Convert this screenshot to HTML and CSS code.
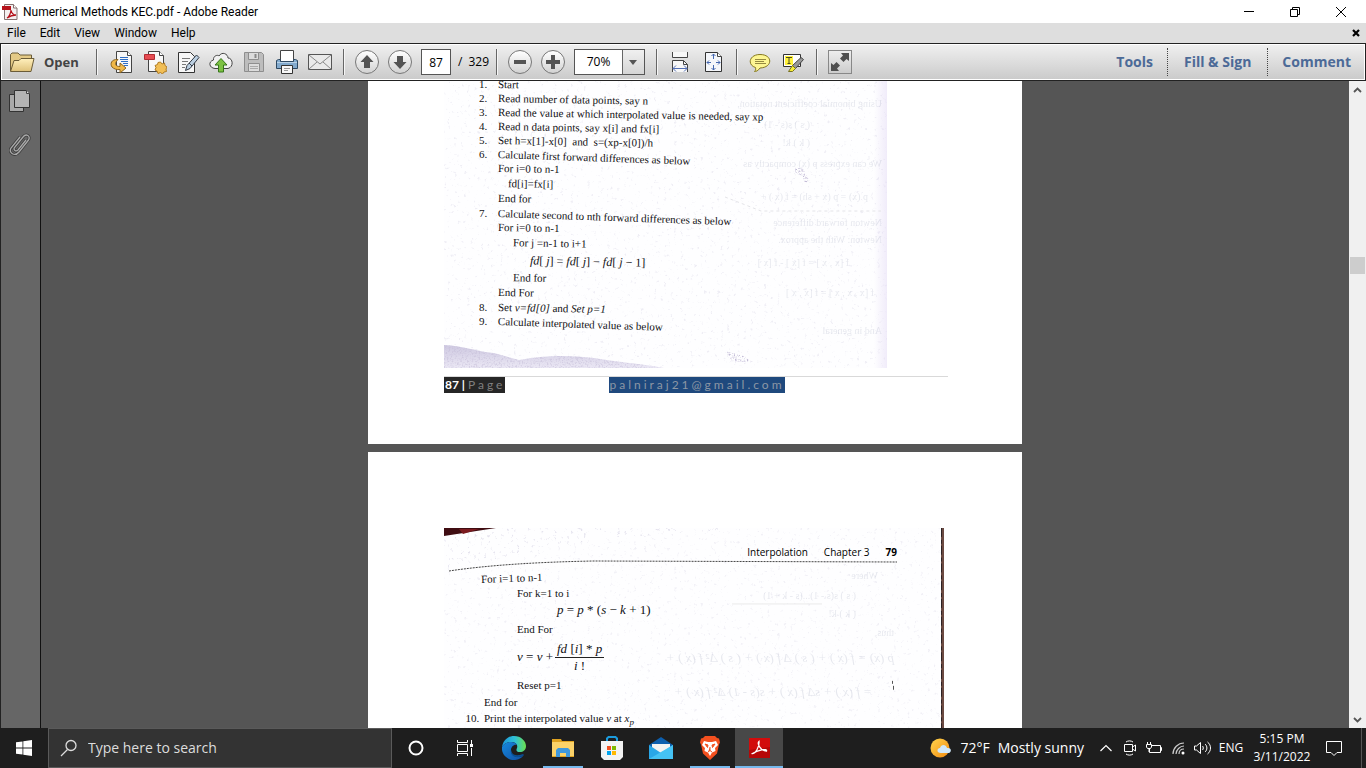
FILE: index.html
```html
<!DOCTYPE html>
<html lang="en">
<head>
<meta charset="utf-8">
<title>Numerical Methods KEC.pdf - Adobe Reader</title>
<link rel="stylesheet" href="styles.css">
</head>
<body>
<header class="titlebar">
  <svg class="app-icon" width="16" height="16" viewBox="0 0 16 16" aria-hidden="true">
    <path d="M2.500.5h9l3.500 3.500v11.500H2.500z" fill="#f4f0f0" stroke="#85706f"/>
    <path d="M11.500.5V4H15" fill="#fff" stroke="#85706f"/>
    <path d="M0 2h9v4H0z" fill="#b5121b"/>
    <path d="M5 14c2-1 4-5 4-8 .5 3 2 5 5 5-3 0-6 1-9 3z" fill="none" stroke="#b5121b" stroke-width="1.300"/>
  </svg>
  <h1 class="window-title">Numerical Methods KEC.pdf - Adobe Reader</h1>
  <div class="window-controls">
    <button class="win-btn" aria-label="Minimize"><svg width="12" height="12" viewBox="0 0 12 12"><path d="M1 5.500h10" stroke="#000" fill="none"/></svg></button>
    <button class="win-btn" aria-label="Restore"><svg width="12" height="12" viewBox="0 0 12 12"><path d="M1.500 3.500h7v7h-7zM3.500 3.500v-2h7v7h-2" stroke="#000" fill="none"/></svg></button>
    <button class="win-btn" aria-label="Close"><svg width="12" height="12" viewBox="0 0 12 12"><path d="M1 1l10 10M11 1L1 11" stroke="#000" fill="none"/></svg></button>
  </div>
</header>
<nav class="menubar" aria-label="Menu">
  <button class="menu-item">File</button>
  <button class="menu-item">Edit</button>
  <button class="menu-item">View</button>
  <button class="menu-item">Window</button>
  <button class="menu-item">Help</button>
  <button class="close-doc" aria-label="Close document"><svg width="8" height="8" viewBox="0 0 8 8"><path d="M1 1l6 6M7 1L1 7" stroke="#000" stroke-width="2.200"/></svg></button>
</nav>
<div class="toolbar" role="toolbar" aria-label="Tools">
  <button class="open-btn">
    <svg width="25" height="24" viewBox="0 0 25 24" aria-hidden="true">
      <defs><linearGradient id="folder" x2="0" y2="1"><stop offset="0" stop-color="#fff0bd"/><stop offset="1" stop-color="#dfc27a"/></linearGradient></defs>
      <path d="M.5 21V4.500l1.500-1.500h6l2 2h11.500v3.500" fill="#e4ca87" stroke="#6b5c38"/>
      <path d="M.5 21.500L4 10.500h5l2-2h13L21 21.500z" fill="url(#folder)" stroke="#6b5c38"/>
    </svg>
    <span>Open</span>
  </button>
  <span class="sep"></span>
  <div class="group files">
    <button class="tool" aria-label="Convert"><svg width="24" height="24" viewBox="0 0 24 24"><path d="M6.500 1.500h11l4 4v17h-15z" fill="#f7f7f7" stroke="#444"/><path d="M17.500 1.500v4h4" fill="#fff" stroke="#444"/><path d="M10 7.500h8M10 9.500h8M11 11.500h7M13 13.500h5M14 15.500h4" stroke="#2f6ec4"/><path d="M8 9.500C1 9 0 14 2 17c2 2 5 3 8 2.500V23l6-5-6-5v3.500c-5 0-6-3-2-7z" fill="#f0b848" stroke="#8c6420"/></svg></button>
    <button class="tool" aria-label="Create PDF"><svg width="24" height="24" viewBox="0 0 24 24"><path d="M5.500 1.500h11l4 4v16h-15z" fill="#f8f8f8" stroke="#444"/><path d="M16.500 1.500v4h4" fill="#fff" stroke="#444"/><path d="M1.500 4.500h10v5h-10z" fill="#e64c52" stroke="#b12a32"/><path d="M17.500 12l1.500 2 2.500-1 .5 2.500 2 1.500-1 2 .5 2.500-2.500.5-1.500 2-2-1.500-2.500 1-1-2.500-2-1 1-2.500-1-2 2.500-1 .5-2z" fill="#f1be55" stroke="#b07c24"/></svg></button>
    <button class="tool" aria-label="Edit PDF"><svg width="24" height="24" viewBox="0 0 24 24"><path d="M2.500 2.500h12l4 4v16h-16z" fill="#f7f7f7" stroke="#333"/><path d="M6 8.500h8M6 11.500h6M6 14.500h4M6 17.500h3" stroke="#777"/><path d="M20.500 5l2.500 2.500-9 11-4.500 2 1.500-5z" fill="#bcd0e2" stroke="#333a45"/><path d="M13 13l3 3" stroke="#333a45"/></svg></button>
    <button class="tool" aria-label="Upload to cloud"><svg width="24" height="24" viewBox="0 0 24 24"><path d="M6 18.500c-6-.5-7-7-1.500-8.500C4 5.500 9 4.500 10 6c3-5 9-2 9 2 5 0 6 9 0 10.500z" fill="#f1f1f1" stroke="#444"/><path d="M12 8.500l6 6.500h-3.500v7h-5v-7H6z" fill="#7cc142" stroke="#37761b"/></svg></button>
    <button class="tool" aria-label="Save" disabled><svg width="24" height="24" viewBox="0 0 24 24"><path d="M2.500 2.500h17l2 2v17h-19z" fill="#bdbdbd" stroke="#8e8e8e"/><path d="M6.500 2.500h10v7h-10zM6.500 13.500h11v8h-11z" fill="#dcdcdc" stroke="#8e8e8e"/><path d="M13.500 4v4" stroke="#888" stroke-width="2"/><path d="M8 16.500h8M8 18.500h8" stroke="#aaa"/></svg></button>
    <button class="tool" aria-label="Print"><svg width="24" height="24" viewBox="0 0 24 24"><path d="M5.500.5h13v11h-13z" fill="#fff" stroke="#444"/><path d="M1.500 10.500l2-1h2v2h13v-2h2l2 1v8h-21z" fill="#82aace" stroke="#2d4862"/><path d="M2 12.500h20" stroke="#b9d2e7"/><path d="M6.500 15.500h11v8h-11z" fill="#f7f7f7" stroke="#333"/><path d="M9 18.500h6M9 20.500h4" stroke="#999"/></svg></button>
    <button class="tool" aria-label="Email"><svg width="24" height="24" viewBox="0 0 24 24"><path d="M.5 4.500h23v15H.5z" fill="#e9e9e9" stroke="#555"/><path d="M1 5l11 9 11-9M1 19l8-7M23 19l-8-7" fill="none" stroke="#888"/></svg></button>
  </div>
  <span class="sep"></span>
  <div class="group">
    <button class="round" aria-label="Previous page"><svg width="24" height="24" viewBox="0 0 24 24"><path d="M12 5l6.500 7H15v6H9v-6H5.500z" fill="#545454"/></svg></button>
    <button class="round" aria-label="Next page"><svg width="24" height="24" viewBox="0 0 24 24"><path d="M12 19l6.500-7H15V6H9v6H5.500z" fill="#545454"/></svg></button>
    <div class="pager">
      <input class="page-no" id="page-no" type="text" value="87" aria-label="Page number">
      <label class="page-total" for="page-no"><span>/</span><span>329</span></label>
    </div>
  </div>
  <span class="sep"></span>
  <div class="group">
    <button class="round" aria-label="Zoom out"><svg width="24" height="24" viewBox="0 0 24 24"><path d="M6 10h12v4H6z" fill="#545454"/></svg></button>
    <button class="round" aria-label="Zoom in"><svg width="24" height="24" viewBox="0 0 24 24"><path d="M10 5h4v5h5v4h-5v5h-4v-5H5v-4h5z" fill="#545454"/></svg></button>
    <div class="zoom-box">
      <select class="zoom" aria-label="Zoom level"><option>70%</option></select>
      <svg class="zoom-arrow" width="22" height="24" viewBox="0 0 22 24" aria-hidden="true"><path d="M0 0v24" stroke="#666" stroke-width="2"/><path d="M7 10h8l-4 5z" fill="#555"/></svg>
    </div>
  </div>
  <span class="sep"></span>
  <div class="group">
    <button class="tool" aria-label="Fit width"><svg width="24" height="24" viewBox="0 0 24 24"><path d="M4.500 2v5.500h15V2M4.500 22V10.500h11l4 4V22" fill="#f7f7f7" stroke="#444"/><path d="M15.500 10.500v4h4" fill="none" stroke="#444"/><path d="M5 18.500h14M8 15.500l-3 3 3 3M16 15.500l3 3-3 3" stroke="#5470b5" fill="none"/></svg></button>
    <button class="tool" aria-label="Fit page"><svg width="24" height="24" viewBox="0 0 24 24"><path d="M4.500 2.500h12l4 4v15h-16z" fill="#f4f6fa" stroke="#333"/><path d="M16.500 2.500v4h4" fill="#fff" stroke="#444"/><path d="M12.500 4v5M12.500 15v5M6 12.500h4M15 12.500h4M10.500 6l2-2 2 2M10.500 18l2 2 2-2M8 10.500l-2 2 2 2M17 10.500l2 2-2 2" stroke="#4467b0" fill="none"/></svg></button>
  </div>
  <span class="sep"></span>
  <div class="group">
    <button class="tool" aria-label="Add note"><svg width="24" height="24" viewBox="0 0 24 24"><path d="M12 4.500c13 0 13 13 0 13.500-2 3-4 3.500-5.500 3.500 1-1 1.500-2 1-4C-1 15 1 4.500 12 4.500z" fill="#fdf692" stroke="#85781f"/><path d="M7 9.500h11M7 11.500h9M7 13.500h11" stroke="#958a40"/></svg></button>
    <button class="tool" aria-label="Highlight text"><svg width="24" height="24" viewBox="0 0 24 24"><path d="M2.500 4.500h17v12h-17z" fill="#fff" stroke="#333"/><path d="M4 6h8v9H4z" fill="#fff23c"/><path d="M5 7.500h6M8 7v7M6.500 13.500h3" stroke="#4b4b20"/><path d="M20 7.500l2.500 2-8 9-3-3z" fill="#999" stroke="#444"/><path d="M11.500 15.500l3 3-3 3h-4z" fill="#f4ed36" stroke="#777022"/></svg></button>
  </div>
  <span class="sep"></span>
  <button class="tool expand" aria-label="Read mode"><svg width="24" height="24" viewBox="0 0 24 24"><path d="M13 3h8v8l-2.500-2-3 3-3.500-3.500 3-3zM3 13l2.500 2 3-3 3.500 3.500-3 3 2 2.500H3z" fill="#505050"/></svg></button>
  <div class="panes">
    <button class="pane-btn">Tools</button>
    <button class="pane-btn wide">Fill &amp; Sign</button>
    <button class="pane-btn">Comment</button>
  </div>
</div>
<main class="workspace">
  <aside class="nav-pane">
    <button class="nav-btn" aria-label="Page thumbnails"><svg width="22" height="24" viewBox="0 0 22 24"><path d="M.5 5.500h14v17H.5z" fill="#a9a9a9" stroke="#333"/><path d="M5.500 1.500h12l3 3v14h-15z" fill="#b4b4b4" stroke="#333"/><path d="M17.500 1.500v3h3" fill="#ddd" stroke="#444"/></svg></button>
    <button class="nav-btn" aria-label="Attachments"><svg width="22" height="24" viewBox="0 0 22 24"><path d="M17 8l-8 10c-2 2-5 0-3.500-2.500L14 5c3-4 8-1 5.500 3L10 20c-4 5-11 1-8-4l9-11" fill="none" stroke="#3e3e3e" stroke-width="3"/><path d="M17 8l-8 10c-2 2-5 0-3.500-2.500L14 5c3-4 8-1 5.500 3L10 20c-4 5-11 1-8-4l9-11" fill="none" stroke="#aaa" stroke-width="1.300"/></svg></button>
  </aside>
  <div class="canvas">
    <section class="page first">
      <article class="scan scan-a">
        <svg class="texture" viewBox="0 0 443 287" preserveAspectRatio="none" aria-hidden="true">
          <defs>
            <filter id="specks" x="0" y="0" width="1" height="1"><feTurbulence type="fractalNoise" baseFrequency=".3" numOctaves="3" seed="4"/><feColorMatrix values="0 0 0 0 .7  0 0 0 0 .68  0 0 0 0 .8  0 0 0 6 -3.900"/><feComposite in2="SourceGraphic" operator="in"/></filter>
            <filter id="grain" x="0" y="0" width="1" height="1"><feTurbulence type="fractalNoise" baseFrequency=".6" numOctaves="3" seed="9"/><feColorMatrix values="0 0 0 0 .55  0 0 0 0 .5  0 0 0 0 .68  0 0 0 4 -1.900"/><feComposite in2="SourceGraphic" operator="in"/></filter>
            <linearGradient id="edge"><stop offset="0" stop-color="#e3daf5" stop-opacity="0"/><stop offset="1" stop-color="#e3daf5" stop-opacity=".5"/></linearGradient>
            <linearGradient id="fade" x2="0" y2="1"><stop offset="0" stop-color="#c3bcda"/><stop offset="1" stop-color="#e6e2f2"/></linearGradient>
          </defs>
          <path d="M0 0h443v287H0z" fill="#fefeff"/>
          <path d="M0 0h443v287H0z" filter="url(#specks)" opacity=".4"/>
          <path d="M430 0h13v287h-13z" fill="url(#edge)"/>
          <path d="M0 264c20 1 35 7 50 8l25 7c25-5 50-5 75-2 20 4 45 5 70 10H0z" fill="url(#fade)" opacity=".8"/>
          <path d="M0 264c20 1 35 7 50 8l25 7c25-5 50-5 75-2 20 4 45 5 70 10H0z" filter="url(#grain)" opacity=".5"/>
          <path d="M281 270l18 5 9 6-22-1z" fill="#cbc5dd" filter="url(#grain)"/>
          <path d="M352 86l8 3 5 10-4 4-3-9-9-2z" fill="#bbb" filter="url(#grain)"/>
          <path d="M281 116l36 14h120" fill="none" stroke="#e4e4e8" stroke-dasharray="3 3"/>
          <g class="ghost">
            <text transform="translate(438 26) scale(-1 1)">Using binomial coefficient notation,</text>
            <text transform="translate(366 47) scale(-1 1)">( s )   s(s - 1)</text>
            <text transform="translate(366 65) scale(-1 1)">( k )        k!</text>
            <text transform="translate(438 86) scale(-1 1)">We can express p (x) compactly as</text>
            <text transform="translate(424 119) scale(-1 1)">p (x) = p (x + sh) = f (x ) +</text>
            <text transform="translate(438 145) scale(-1 1)">Newton forward difference</text>
            <text transform="translate(438 162) scale(-1 1)">Newton: With the approx.</text>
            <text transform="translate(405 185) scale(-1 1)">f [x , x ] = f [x ] - f [x ]</text>
            <text transform="translate(430 215) scale(-1 1)">f [x , x , x ] = f [x , x ]</text>
            <text transform="translate(438 253) scale(-1 1)">And in general</text>
          </g>
        </svg>
        <ol class="steps">
          <li><p class="t1">Start</p></li>
          <li><p class="t1">Read number of data points, say n</p></li>
          <li><p class="t1">Read the value at which interpolated value is needed, say xp</p></li>
          <li><p class="t1">Read n data points, say x[i] and fx[i]</p></li>
          <li><p class="t1">Set h=x[1]-x[0]&nbsp; and &nbsp;s=(xp-x[0])/h</p></li>
          <li><p class="t2">Calculate first forward differences as below</p>
            <p class="code">For i=0 to n-1</p>
            <p class="code in1">fd[i]=fx[i]</p>
            <p class="code">End for</p></li>
          <li><p class="t2">Calculate second to nth forward differences as below</p>
            <p class="code">For i=0 to n-1</p>
            <p class="code in2">For j =n-1 to i+1</p>
            <p class="formula in3"><i>fd</i>[ <i>j</i>] = <i>fd</i>[ <i>j</i>] − <i>fd</i>[ <i>j</i> − 1]</p>
            <p class="code in2">End for</p>
            <p class="code">End For</p></li>
          <li><p class="t1">Set <i>v=fd[0]</i> and <i>Set p=1</i></p></li>
          <li><p class="t2">Calculate interpolated value as below</p></li>
        </ol>
      </article>
      <footer class="page-footer">
        <span class="folio"><b>87 |</b><span class="spaced">Page</span></span>
        <a class="mail-link spaced" href="mailto:palniraj21@gmail.com">palniraj21@gmail.com</a>
      </footer>
    </section>
    <section class="page second">
      <article class="scan scan-b">
        <svg class="texture" viewBox="0 0 500 220" preserveAspectRatio="none" aria-hidden="true">
          <path d="M0 0h500v220H0z" fill="#fefeff"/>
          <path d="M0 0h500v220H0z" filter="url(#specks)" opacity=".35"/>
          <path d="M0 0h330L160 10 0 42z" filter="url(#specks)" opacity=".5"/>
          <path d="M0 0h52L0 8z" fill="#3f0d12"/><path d="M15 1h20l-16 5z" fill="#7b1b20"/>
          <path d="M497 0h3v220h-3z" fill="#6b4a42"/><path d="M497.500 0v220" stroke="#2b2224" stroke-dasharray="9 3 4 2"/>
          <path d="M448.500 155v3M449.500 160v4" stroke="#555"/>
          <g class="ghost">
            <text transform="translate(434 52) scale(-1 1)">Where</text>
            <text transform="translate(412 72) scale(-1 1)">( s )    s(s - 1)...(s - k + 1)</text>
            <text transform="translate(412 90) scale(-1 1)">( k )                k!</text>
            <path d="M288 77h90" stroke="#888"/>
            <text transform="translate(450 109) scale(-1 1)">thus,</text>
            <text class="ghost-big" transform="translate(450 136) scale(-1 1)">p (x) = f (x ) + ( s ) Δ f (x ) + ( s ) Δ² f (x ) +</text>
            <text class="ghost-big" transform="translate(428 170) scale(-1 1)">= f (x ) + sΔ f (x ) + s(s - 1) Δ² f (x ) +</text>
          </g>
        </svg>
        <header class="running-head"><span>Interpolation</span><span>Chapter 3</span><b>79</b></header>
        <svg class="head-rule" viewBox="0 0 448 12" preserveAspectRatio="none" aria-hidden="true"><path d="M0 11C40 5 90 2 145 1L448 2" fill="none" stroke="#444" stroke-dasharray="2 1"/></svg>
        <div class="listing">
          <p class="up">For i=1 to n-1</p>
          <p class="deep">For k=1 to i</p>
          <p class="display deeper"><i>p</i> = <i>p</i> * (<i>s</i> − <i>k</i> + 1)</p>
          <p class="deep">End For</p>
          <div class="equation deep"><span><i>v</i> = <i>v</i> +</span><span class="fraction"><span class="num"><i>fd</i> [<i>i</i>] * <i>p</i></span><span class="den"><i>i</i> !</span></span></div>
          <p class="deep">Reset p=1</p>
          <p class="closing">End for</p>
        </div>
        <ol class="steps last" start="10"><li><p>Print the interpolated value <i>v</i> at <i>x<sub>p</sub></i></p></li></ol>
      </article>
    </section>
  </div>
  <div class="scrollbar">
    <button class="scroll-btn" aria-label="Scroll up"><svg width="9" height="6" viewBox="0 0 9 6"><path d="M1 5l3.500-3.500L8 5" fill="none" stroke="#555" stroke-width="1.800"/></svg></button>
    <div class="track"><span class="thumb"></span></div>
    <button class="scroll-btn" aria-label="Scroll down"><svg width="9" height="6" viewBox="0 0 9 6"><path d="M1 1l3.500 3.500L8 1" fill="none" stroke="#555" stroke-width="1.800"/></svg></button>
  </div>
</main>
<footer class="taskbar">
  <button class="task" aria-label="Start"><svg width="16" height="16" viewBox="0 0 16 16"><path d="M0 2.300L6.500 1.400v6.200H0zM7.300 1.300L16 0v7.600H7.300zM0 8.400h6.500v6.200L0 13.700zM7.300 8.400H16V16l-8.700-1.300z" fill="#fff"/></svg></button>
  <label class="search">
    <svg width="18" height="18" viewBox="0 0 18 18" aria-hidden="true"><circle cx="11" cy="6.500" r="5" fill="none" stroke="#ddd" stroke-width="1.300"/><path d="M7.500 10.500L1 17" stroke="#ddd" stroke-width="1.300"/></svg>
    <input type="text" placeholder="Type here to search" aria-label="Search">
  </label>
  <div class="apps">
    <button class="task" aria-label="Cortana"><svg width="16" height="16" viewBox="0 0 16 16"><circle cx="8" cy="8" r="6.500" fill="none" stroke="#fff" stroke-width="2"/></svg></button>
    <button class="task" aria-label="Task view"><svg width="16" height="16" viewBox="0 0 16 16"><path d="M.5 0v2.500h10V0M.5 4.500h10v7H.5zM.5 16v-2.500h10V16M14.500 0v4M14.500 8v8" fill="none" stroke="#fff"/><path d="M13 4h3v3h-3z" fill="#fff"/></svg></button>
    <button class="task" aria-label="Microsoft Edge"><svg width="24" height="24" viewBox="0 0 24 24"><defs><linearGradient id="e1"><stop offset="0" stop-color="#1b95dc"/><stop offset=".55" stop-color="#30c2d5"/><stop offset="1" stop-color="#6be04d"/></linearGradient><linearGradient id="e2" x2="1" y2="1"><stop offset="0" stop-color="#1689df"/><stop offset="1" stop-color="#104fa3"/></linearGradient></defs><path d="M0 11C1 4 6 0 12 0c7 0 12 5 12 10 0 4-3 6-6 6-4 0-4-2-3-4 1-3-1-6-6-6-4 0-7 2-9 5z" fill="url(#e1)"/><path d="M0 11C2 8 5 6 9 6c3 0 5 1 6 3-3-1-6 2-6 5 0 4 3 7 7 7 2 0 4-.5 6-2-3 4-7 5-10 5C5 24-1 18 0 11z" fill="url(#e2)"/><path d="M9 13c0 5 4 8 12 5l1 1c-7 5-15 1-13-6z" fill="#0a4f93"/></svg></button>
    <button class="task running" aria-label="File Explorer"><svg width="22" height="20" viewBox="0 0 22 20"><path d="M0 1h9l1 2h12v16H0z" fill="#e0a321"/><path d="M0 4h22v14H0z" fill="#fbd269"/><path d="M4 19v-7l2-2h10l2 2v7h-4v-4H8v4z" fill="#3f98dc"/></svg></button>
    <button class="task" aria-label="Microsoft Store"><svg width="24" height="24" viewBox="0 0 24 24"><path d="M7 6V2.500L8.500 1h7L17 2.500V6" fill="none" stroke="#1b9bdd" stroke-width="2"/><path d="M1 5h22v16l-3 3H4l-3-3z" fill="#f3f3f3"/><path d="M7 10h4v4H7z" fill="#f25022"/><path d="M12 10h4v4h-4z" fill="#7fba00"/><path d="M7 15h4v4H7z" fill="#00a4ef"/><path d="M12 15h4v4h-4z" fill="#ffb900"/></svg></button>
    <button class="task" aria-label="Mail"><svg width="24" height="24" viewBox="0 0 24 24"><path d="M0 9l12-8 12 8v6H0z" fill="#0d5fae"/><path d="M3 8h18v9H3z" fill="#f2f2f2"/><path d="M0 9l12 8 12-8v14H0z" fill="#29a7e8"/><path d="M0 23L24 9v14z" fill="#45c2f4"/></svg></button>
    <button class="task running" aria-label="Brave"><svg width="20" height="24" viewBox="0 0 20 24"><path d="M5 0h10l2 2 2 .5 1 4-1 2-2 9-7 6.500L3 17.500 1 8.500l-1-2 1-4L3 2z" fill="#f3501f"/><path d="M4 5l4 1h4l4-1 2 4-3 3 .5 3-3.500 1.500L10 20l-2-3.500L4.500 15l.5-3-3-3z" fill="#fff"/><path d="M5 8l3 1-.5 2.500zM15 8l-3 1 .5 2.500zM10 11v3.500l-2 1.500M10 14.500l2 1.500" fill="#f3501f" stroke="#f3501f"/></svg></button>
    <button class="task running active" aria-label="Adobe Reader"><svg width="21" height="20" viewBox="0 0 21 20"><path d="M0 0h21v20H0z" fill="#b50808"/><path d="M0 0h21v9L0 12z" fill="#d20c0c"/><path d="M3.500 15.500c3 .5 7-7 6.500-12-2 2 1 9 7.500 9.500 1-3-9-1-14 2.500z" fill="none" stroke="#fff" stroke-width="1.300"/></svg></button>
  </div>
  <div class="tray">
    <button class="weather"><svg width="22" height="20" viewBox="0 0 22 20" aria-hidden="true"><defs><linearGradient id="sun" x2="1" y2="1"><stop offset="0" stop-color="#ffd54e"/><stop offset="1" stop-color="#f28c12"/></linearGradient></defs><circle cx="10" cy="10" r="9.500" fill="url(#sun)"/><path d="M11 15c-5 0-4-5-1-5 1-4 6-4 7 0 5-1 5 5 1 5z" fill="#cfe8fb"/></svg><span>72°F</span><span>Mostly sunny</span></button>
    <button class="tray-btn" aria-label="Show hidden icons"><svg width="12" height="8" viewBox="0 0 12 8"><path d="M.5 7L6 1.500 11.500 7" fill="none" stroke="#fff" stroke-width="1.200"/></svg></button>
    <button class="tray-btn" aria-label="Meet now"><svg width="12" height="16" viewBox="0 0 12 16"><path d="M.5 4.500h8v7h-8zM8.500 7l3-2v6l-3-2M2 2c2-1.500 5-1.500 7 0M2 14c2 1.500 5 1.500 7 0" fill="none" stroke="#fff"/></svg></button>
    <button class="tray-btn" aria-label="Battery"><svg width="16" height="14" viewBox="0 0 16 14"><path d="M6 4.500h8.500v7h-11V8M14.500 6.500h1v3h-1M.5 3.500h5V6l-1 1.500h-3L.5 6zM1.500 1v2M4.500 1v2M3 8v3" fill="none" stroke="#fff"/></svg></button>
    <button class="tray-btn" aria-label="Network"><svg width="13" height="13" viewBox="0 0 13 13"><path d="M1 12C1 6 6 1 12 1M4 12c0-4 4-8 8-8M7 12c0-3 2-5 5-5" fill="none" stroke="#ccc" stroke-width="1.200"/><circle cx="11" cy="11" r="1.500" fill="#fff"/></svg></button>
    <button class="tray-btn" aria-label="Volume"><svg width="17" height="14" viewBox="0 0 17 14"><path d="M.5 5h2l4-3.500v11L2.500 9h-2zM8.500 5c1 1 1 3 0 4M11 3c2.500 2 2.500 6 0 8M13.500 1c4 3 4 9 0 12" fill="none" stroke="#fff"/></svg></button>
    <button class="lang">ENG</button>
    <button class="clock"><span>5:15 PM</span><span>3/11/2022</span></button>
    <button class="notify" aria-label="Notifications"><svg width="17" height="17" viewBox="0 0 17 17"><path d="M.5 1.500h15v11H11l-3 3-3-3H.5z" fill="none" stroke="#fff"/></svg></button>
  </div>
</footer>
</body>
</html>
```
FILE: styles.css
```css
* { box-sizing: border-box; }
body {
  margin: 0;
  height: 100vh;
  display: flex;
  flex-direction: column;
  overflow: hidden;
  font: 12px/16px "Open Sans", "Noto Sans", sans-serif;
  color: #000;
  background: #fff;
}
button {
  display: flex;
  align-items: center;
  justify-content: center;
  padding: 0;
  border: 0;
  background: none;
  font: inherit;
  color: inherit;
}
svg { display: block; flex: none; }
h1, p, ol { margin: 0; padding: 0; }

/* Title bar and menu */
.titlebar { display: flex; align-items: center; height: 23px; padding: 0 2px; gap: 5px; }
.titlebar, .menubar { font-family: Roboto, "Open Sans", sans-serif; }
.window-title { font-size: 12px; font-weight: 400; }
.window-controls { display: flex; margin-left: auto; }
.win-btn { width: 46px; height: 20px; }
.menubar { display: flex; height: 20px; padding-right: 6px; background: #dedede; }
.menu-item { padding: 0 7px; }
.close-doc { margin-left: auto; }

/* Toolbar */
.toolbar {
  display: flex;
  align-items: center;
  flex: none;
  height: 38px;
  padding-left: 9px;
  border: 1px solid #222;
  box-shadow: inset 0 0 0 1px #fff;
  background: linear-gradient(#f0f0f0, #cacaca);
}
.open-btn { gap: 9px; width: 75px; justify-content: flex-start; font-size: 13px; font-weight: 700; color: #444; }
.sep { width: 1px; height: 26px; margin: 0 11px; background: #666; box-shadow: 1px 0 #f6f6f6; }
.group { display: flex; align-items: center; gap: 9px; }
.files { padding-left: 2px; }
.tool { width: 24px; height: 24px; }
.round {
  width: 24px;
  height: 24px;
  border: 1px solid #777;
  border-radius: 50%;
  background: linear-gradient(#fff, #d2d2d2);
}
.pager { display: flex; align-items: center; gap: 7px; width: 64px; white-space: nowrap; }
.page-no {
  flex: none;
  width: 30px;
  height: 26px;
  padding: 0;
  border: 1px solid #555;
  text-align: center;
  font: inherit;
  background: #fff;
}
.page-total { display: flex; gap: 6px; }
.zoom-box { display: grid; width: 71px; height: 26px; border: 1px solid #555; background: #fff; }
.zoom {
  grid-area: 1 / 1;
  appearance: none;
  border: 0;
  padding: 0 22px 0 0;
  text-align: center;
  text-align-last: center;
  font: inherit;
  color: #000;
  background: none;
}
.zoom-arrow { grid-area: 1 / 1; justify-self: end; background: linear-gradient(#f0f0f0, #d5d5d5); pointer-events: none; }
.expand { border: 1px solid #888; background: linear-gradient(#eee, #ccc); }
.panes { display: flex; margin-left: auto; }
.pane-btn { height: 28px; padding: 0 14px; font-size: 14px; font-weight: 700; color: #4c6a97; }
.pane-btn + .pane-btn { border-left: 1px dotted #444; }
.pane-btn.wide { padding: 0 16px; }

/* Workspace */
.workspace { flex: 1; min-height: 0; display: flex; background: #555; }
.nav-pane {
  display: flex;
  flex-direction: column;
  align-items: center;
  gap: 19px;
  width: 41px;
  padding: 8px 2px 0 0;
  border-right: 1px solid #111;
  border-left: 1px solid #222;
  background: #666;
}
.canvas { flex: 1; min-width: 0; display: flex; flex-direction: column; align-items: center; gap: 8px; overflow: hidden; }
.page { flex: none; width: 654px; padding: 0 74px 0 76px; background: #fff; }
.page.first { padding-bottom: 51px; }
.page.second { padding-top: 76px; }
.scan {
  position: relative;
  overflow: hidden;
  font: 11px/14px "Liberation Serif", serif;
  color: #111114;
}
.scan-a { width: 443px; padding-bottom: 40px; }
.scan-b { width: 500px; padding-bottom: 20px; }
.texture { position: absolute; inset: 0; width: 100%; height: 100%; }
.ghost { font: 10px "Liberation Serif", serif; fill: #7780a0; opacity: .17; }
.ghost-big { font-size: 13px; font-style: italic; }
.steps { position: relative; margin-top: -4px; padding-left: 46px; }
.steps li { padding-left: 8px; }
.steps p { transform-origin: left center; }
.t1 { transform: rotate(1deg); }
.t2 { transform: rotate(2deg); }
.code { line-height: 15px; transform: rotate(1deg); }
.in1 { padding-left: 10px; }
.in2 { padding-left: 15px; }
.in3 { padding-left: 32px; }
.formula { font-size: 12px; line-height: 20px; transform: rotate(1deg); }

.page-footer {
  display: flex;
  gap: 104px;
  margin-top: 8px;
  border-top: 1px solid #d9d9d9;
  font: 12px/16px Lato, sans-serif;
  color: #808080;
  white-space: nowrap;
}
.folio { display: flex; gap: 3px; padding-left: 1px; background: #262626; }
.folio b { color: #fff; }
.spaced { letter-spacing: 3px; }
.mail-link { background: #1f497d; color: #8c97a5; text-decoration: none; }

.running-head {
  position: relative;
  display: flex;
  justify-content: flex-end;
  gap: 16px;
  padding: 16px 47px 0 0;
  font: 10px/16px "Open Sans", sans-serif;
  color: #000;
}
.head-rule { position: relative; width: 448px; height: 12px; margin-left: 5px; }
.listing { position: relative; padding-left: 37px; }
.up { transform: rotate(-2deg); transform-origin: left center; }
.deep { margin-left: 36px; }
.deeper { margin-left: 76px; }
.display { font-size: 13px; line-height: 20px; }
.deeper + .deep { margin-top: 2px; }
.equation { display: flex; align-items: center; gap: 2px; height: 42px; font-size: 13px; }
.fraction { display: grid; text-align: center; line-height: 16px; }
.num { border-bottom: 1px solid #222; padding: 0 2px; }
.closing { padding: 3px 0 2px 3px; }
.last { margin: 0; padding-left: 38px; }
.last li { padding-left: 2px; }
.last sub { font-size: 9px; line-height: 0; }

.scrollbar { display: flex; flex-direction: column; width: 17px; background: #f0f0f0; }
.scroll-btn { height: 17px; }
.track { flex: 1; display: flex; flex-direction: column; }
.track::before { content: ""; height: 26%; }
.thumb { height: 17px; margin: 0 1px; background: #cdcdcd; }

/* Taskbar */
.taskbar { display: flex; flex: none; height: 40px; background: #1e1e1e; color: #fff; }
.task { width: 48px; height: 40px; }
.search { display: flex; align-items: center; gap: 10px; width: 344px; padding-left: 11px; border: 1px solid #5a5a5a; background: #333; }
.search input { flex: 1; min-width: 0; border: 0; padding: 0; outline: 0; background: none; font: 14px/20px "Open Sans", sans-serif; color: #ddd; }
.search input::placeholder { color: #ddd; opacity: 1; }
.apps { display: flex; gap: 1px; }
.running { background: linear-gradient(#76b9ed, #76b9ed) center bottom / 40px 2px no-repeat; }
.active { background-color: #484848; background-size: 48px 2px; }
.tray { display: flex; align-items: center; margin-left: auto; padding-right: 4px; }
.weather { gap: 8px; margin-right: 10px; font-size: 14px; }
.tray-btn { width: 24px; height: 40px; }
.lang { width: 34px; }
.clock { flex-direction: column; width: 68px; line-height: 18px; }
.notify { width: 46px; height: 40px; padding-right: 8px; border-right: 1px solid #555; }
```
